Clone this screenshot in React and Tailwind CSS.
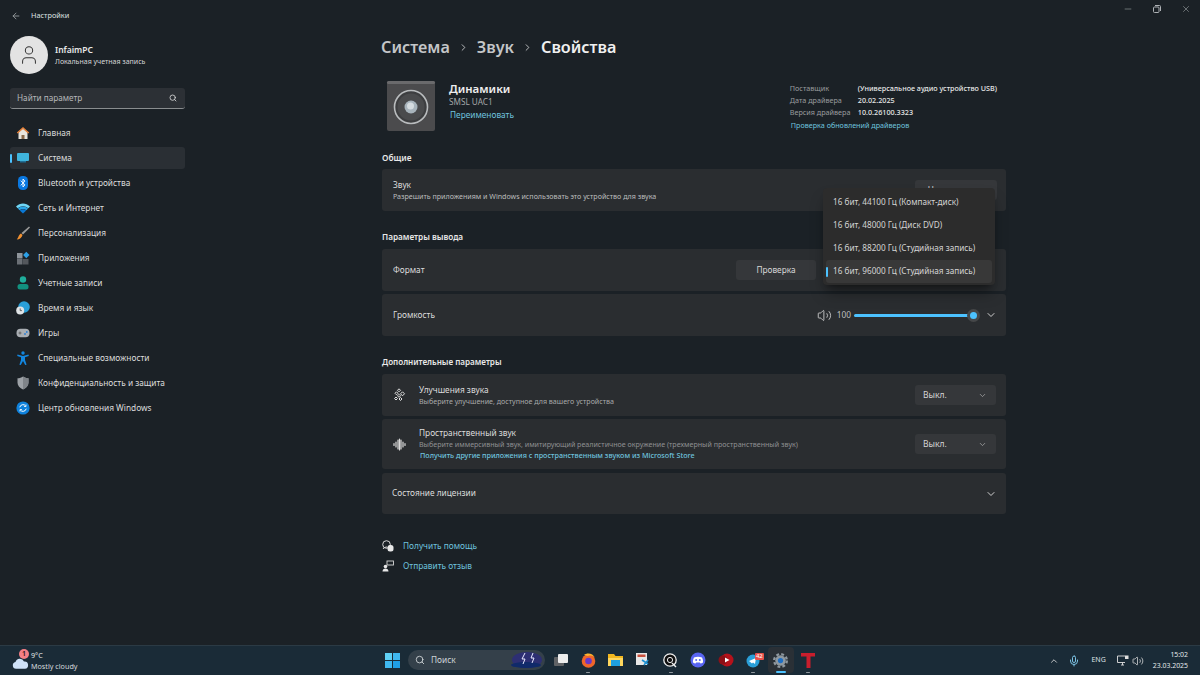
import React from "react";
import {
  ArrowLeft,
  ChevronDown,
  ChevronRight,
  ChevronUp,
  Mic,
  Minus,
  Search,
  User,
  Volume2,
  X,
} from "lucide-react";

const HomeIcon = () => (
  <svg width="14" height="14" viewBox="0 0 14 14">
    <path d="M2.5 6.5 7 2.5l4.5 4V13h-9z" fill="#e8e4dc" />
    <path d="M5.5 9h3v4h-3z" fill="#8a6a4a" />
    <path d="M7 1 .8 6.6l1 1L7 3l5.2 4.6 1-1z" fill="#e8843c" />
  </svg>
);
const SystemIcon = () => (
  <svg width="14" height="12" viewBox="0 0 14 12">
    <rect x="1" y="1" width="12" height="8" rx="1" fill="#3fb4dc" />
    <rect x="4" y="9" width="6" height="1.5" fill="#1f6f96" />
  </svg>
);
const BluetoothIcon = () => (
  <svg width="10" height="14" viewBox="0 0 10 14">
    <rect width="10" height="14" rx="4.5" fill="#0a78e0" />
    <path d="M2.7 4.6 7 8.9 5 11V3l2 2.1-4.3 4.3" fill="none" stroke="#fff" strokeWidth=".9" />
  </svg>
);
const WifiIcon = () => (
  <svg width="14" height="11" viewBox="0 0 14 11">
    <path d="M0 3.5C4-.6 10-.6 14 3.5L12.3 5.3C9 2.6 5 2.6 1.7 5.3z" fill="#6fd6f5" />
    <path d="M1.9 5.5c3-2.8 7.2-2.8 10.2 0L10.4 7.2c-2-1.7-4.8-1.7-6.8 0z" fill="#2ba6e8" />
    <path d="M3.8 7.4c2-1.5 4.4-1.5 6.4 0L7 10.6z" fill="#0a78d4" />
  </svg>
);
const BrushIcon = () => (
  <svg width="14" height="14" viewBox="0 0 14 14">
    <path d="M13 .5 14 1.5 7 8.5 5.5 7z" fill="#9a9a9a" />
    <path d="M5 7.5 6.5 9C6 11.5 3.5 13.5.8 13.5 2.5 12 2.5 8.5 5 7.5z" fill="#f09030" />
  </svg>
);
const AppsIcon = () => (
  <svg width="14" height="14" viewBox="0 0 14 14">
    <rect x="1" y="2" width="5.5" height="5.5" fill="#8f959b" />
    <rect x="1" y="8" width="5.5" height="5.5" fill="#6b7076" />
    <rect x="7" y="8" width="5.5" height="5.5" fill="#53575c" />
    <path d="M10.3 .8 13.5 4l-3.2 3.2L7.1 4z" fill="#2b9fe6" />
  </svg>
);
const AccountIcon = () => (
  <svg width="12" height="14" viewBox="0 0 12 14">
    <circle cx="6" cy="3.5" r="3.2" fill="#1fae9c" />
    <rect x="0.5" y="8" width="11" height="5.5" rx="2.5" fill="#12917f" />
  </svg>
);
const TimeIcon = () => (
  <svg width="14" height="14" viewBox="0 0 14 14">
    <circle cx="8" cy="6" r="5.8" fill="#2a9fd8" />
    <circle cx="4.2" cy="9.5" r="4" fill="#dfe3e6" />
    <path d="M4.2 7.4v2.2h1.7" fill="none" stroke="#444" strokeWidth=".8" />
  </svg>
);
const GamesIcon = () => (
  <svg width="14" height="10" viewBox="0 0 14 10">
    <rect x=".5" y=".8" width="13" height="8.4" rx="4" fill="#a9aeb3" />
    <path d="M2.5 5h3M4 3.5v3" stroke="#555" strokeWidth=".8" />
    <circle cx="9" cy="6" r=".9" fill="#2b7fd4" />
    <circle cx="10.8" cy="4" r=".9" fill="#2b7fd4" />
  </svg>
);
const AccessIcon = () => (
  <svg width="12" height="14" viewBox="0 0 12 14">
    <circle cx="6" cy="2" r="1.7" fill="#1387e0" />
    <path d="M.5 3.6 6 5l5.5-1.4.3 1.3L8 6.2V9l1.6 4.7-1.4.3L6 10 3.8 14l-1.4-.3L4 9V6.2L.2 4.9z" fill="#1387e0" />
  </svg>
);
const ShieldIcon = () => (
  <svg width="12" height="14" viewBox="0 0 12 14">
    <path d="M6 .5c1.5 1.2 3.5 1.8 5.5 1.8v4.5c0 3-2.3 5.3-5.5 6.7C2.8 12.1.5 9.8.5 6.8V2.3C2.5 2.3 4.5 1.7 6 .5z" fill="#9da2a7" />
    <path d="M6 .5c1.5 1.2 3.5 1.8 5.5 1.8v4.5c0 3-2.3 5.3-5.5 6.7z" fill="#7f8489" />
  </svg>
);
const UpdateIcon = () => (
  <svg width="14" height="14" viewBox="0 0 14 14">
    <circle cx="7" cy="7" r="6.6" fill="#0f82dc" />
    <path d="M3.8 6.3A3.3 3.3 0 0 1 9.700 5M10.200 7.700A3.3 3.3 0 0 1 4.3 9" fill="none" stroke="#fff" strokeWidth="1" />
    <path d="M10 3.5v2H8M4 10.5v-2h2" fill="none" stroke="#fff" strokeWidth=".8" />
  </svg>
);

const navItems = [
  { label: "Главная", icon: <HomeIcon /> },
  { label: "Система", icon: <SystemIcon />, active: true },
  { label: "Bluetooth и устройства", icon: <BluetoothIcon /> },
  { label: "Сеть и Интернет", icon: <WifiIcon /> },
  { label: "Персонализация", icon: <BrushIcon /> },
  { label: "Приложения", icon: <AppsIcon /> },
  { label: "Учетные записи", icon: <AccountIcon /> },
  { label: "Время и язык", icon: <TimeIcon /> },
  { label: "Игры", icon: <GamesIcon /> },
  { label: "Специальные возможности", icon: <AccessIcon /> },
  { label: "Конфиденциальность и защита", icon: <ShieldIcon /> },
  { label: "Центр обновления Windows", icon: <UpdateIcon /> },
];

const SpeakerArt = () => (
  <svg width="50" height="52" viewBox="0 0 50 52">
    <rect x="1" y="1" width="48" height="50" rx="2" fill="#4b4b4d" />
    <rect x="1" y="1" width="48" height="3" rx="1.5" fill="#6a6a6c" />
    <circle cx="25" cy="27" r="16.5" fill="#3d3e40" stroke="#b9bcbe" strokeWidth="1.6" />
    <circle cx="25" cy="27" r="13.5" fill="#4a4b4d" />
    <circle cx="25" cy="27" r="6.5" fill="#a8b4bc" />
    <circle cx="24.5" cy="26" r="3.5" fill="#d5dce0" />
  </svg>
);

const Row = ({ className, children }) => (
  <div className={`flex items-center rounded-[3px] bg-[#2a2d30] ${className}`}>{children}</div>
);

const OffSelect = () => (
  <div className="flex h-[20px] w-[81px] items-center justify-between rounded-[3px] bg-[#35373a] pl-[8px] pr-[9px] text-[8.5px] text-[#d6d6d6]">
    Выкл.
    <ChevronDown size={9} className="text-[#a8a8a8]" />
  </div>
);

const formats = [
  "16 бит, 44100 Гц (Компакт-диск)",
  "16 бит, 48000 Гц (Диск DVD)",
  "16 бит, 88200 Гц (Студийная запись)",
  "16 бит, 96000 Гц (Студийная запись)",
];

const SpatialIcon = () => (
  <svg width="13" height="13" viewBox="0 0 13 13" stroke="#dcdcdc" strokeWidth="1.2" strokeLinecap="round">
    <path d="M1 5.5v2M3 4v5M5 2v9M6.5 1v11M8 2v9M10 4v5M12 5.5v2" />
  </svg>
);
const EnhanceIcon = () => (
  <svg width="13" height="14" viewBox="0 0 13 14" fill="none" stroke="#e0e0e0" strokeWidth="1">
    <path d="M6 .8 7.5 2.3 6 3.8 4.5 2.3zM3.5 3.8 5 5.3 3.5 6.8 2 5.3zM9.5 3.8l2 2-2 2-2-2zM6 6.3l1.5 1.5L6 9.3 4.5 7.8zM3 9l1.5 1.5L3 12l-1.5-1.5zM7.500 9.500 9 11l-1.500 1.500L6 11z" />
  </svg>
);
const HelpIcon = () => (
  <svg width="12" height="12" viewBox="0 0 12 12">
    <circle cx="4.5" cy="4.5" r="3.8" fill="none" stroke="#d8d8d8" strokeWidth="1" />
    <path d="M1 9c1-1.5 2.5-2 4-2" stroke="#d8d8d8" strokeWidth="1" fill="none" />
    <rect x="5.5" y="5" width="6" height="6.5" rx="2.5" fill="#e8e8e8" />
  </svg>
);
const FeedbackIcon = () => (
  <svg width="12" height="12" viewBox="0 0 12 12">
    <rect x="5" y="1" width="6.5" height="4" fill="none" stroke="#d8d8d8" strokeWidth=".9" />
    <circle cx="3.5" cy="6.5" r="1.8" fill="#e8e8e8" />
    <path d="M.5 11.5c0-2 1.3-3 3-3s3 1 3 3z" fill="#e8e8e8" />
  </svg>
);

const Tray = ({ children, dot, active, className = "" }) => (
  <div className={`relative flex h-[26px] w-[27.5px] items-center justify-center ${className}`}>
    {active && <span className="absolute inset-x-[1px] inset-y-0 rounded-[4px] bg-[#2a3036]" />}
    <span className="relative flex">{children}</span>
    {dot && <span className="absolute bottom-[0px] h-[1.5px] w-[4px] rounded-full bg-[#8f979e]" />}
    {active && <span className="absolute bottom-[0px] h-[2px] w-[10px] rounded-full bg-[#4cc2ff]" />}
  </div>
);

const Taskbar = () => (
  <div className="relative flex h-[30px] items-center justify-between border-t border-[#2b3a44] bg-[#1a2b37] text-[#e4e8ea]">
    <div className="flex w-[200px] items-center pl-[12px]">
      <div className="relative h-[18px] w-[19px]">
        <svg width="17" height="14" viewBox="0 0 19 14" className="absolute bottom-0 left-0">
          <path d="M4.5 13.5a3.8 3.8 0 0 1-.6-7.5 5 5 0 0 1 9.5-.6 4 4 0 0 1 1 8.1z" fill="#cfe2f8" />
        </svg>
        <span className="absolute left-[7px] top-[-3px] flex h-[10px] w-[10px] items-center justify-center rounded-full bg-[#f47f86] text-[7px] font-semibold leading-none text-[#2a1114]">
          1
        </span>
      </div>
      <div className="text-[7.2px] leading-[10.5px]">
        <div>9°C</div>
        <div className="text-[#d5dade]">Mostly cloudy</div>
      </div>
    </div>

    <div className="absolute left-[378px] top-[1px] flex items-center">
      <Tray>
        <svg width="15" height="15" viewBox="0 0 15 15" className="ml-[1px]">
          <rect width="7" height="7" fill="#5fd0f5" />
          <rect x="8" width="7" height="7" fill="#3fb8f0" />
          <rect y="8" width="7" height="7" fill="#3fb8f0" />
          <rect x="8" y="8" width="7" height="7" fill="#1f9fe6" />
        </svg>
      </Tray>
      <div className="ml-[2.5px] flex h-[20px] w-[137px] items-center overflow-hidden rounded-full bg-[#34404a] pl-[7px] text-[8.3px] text-[#cfd4d8]">
        <Search size={10} className="text-[#d8dcdf]" />
        <span className="ml-[6px]">Поиск</span>
        <svg width="34" height="18" viewBox="0 0 34 18" className="ml-auto mr-[2px]">
          <ellipse cx="18" cy="9" rx="15" ry="8" fill="#2d2f73" />
          <ellipse cx="17" cy="14" rx="15" ry="3" fill="#102a6a" />
          <path d="M16 2l-3 6h3l-2 5M24 2l-2 5h3l-2 5" stroke="#e8e8ff" strokeWidth="1" fill="none" />
        </svg>
      </div>
      <Tray className="ml-[2px]">
        <svg width="16" height="14" viewBox="0 0 16 14">
          <rect x="1" y="4" width="10" height="9" rx="1" fill="#5f6265" />
          <rect x="5" y="1" width="10" height="9" rx="1" fill="#eceded" />
        </svg>
      </Tray>
      <Tray dot>
        <svg width="15" height="15" viewBox="0 0 15 15">
          <circle cx="7.5" cy="8" r="6.8" fill="#f0662a" />
          <circle cx="7.5" cy="8" r="3.3" fill="#6a37c8" />
          <path d="M3 2c3-2.5 9-2 11 3-2-2.5-5-3-7-2z" fill="#ffb52e" />
        </svg>
      </Tray>
      <Tray>
        <svg width="15" height="14" viewBox="0 0 15 14">
          <path d="M0 1h6l1.500 2H15v10H0z" fill="#f2b71f" />
          <rect y="5" width="15" height="8" fill="#ffd75e" />
          <rect x="3" y="7" width="9" height="6" fill="#1f9fe0" />
        </svg>
      </Tray>
      <Tray>
        <svg width="16" height="16" viewBox="0 0 16 16">
          <rect x="1" y="1" width="11" height="12" fill="#e8e8e8" />
          <rect x="2.5" y="2.5" width="8" height="2.5" fill="#c8503c" />
          <path d="M7 8l6 4M13 8l-4 5" stroke="#1d8fd0" strokeWidth="1.6" />
        </svg>
      </Tray>
      <Tray dot>
        <svg width="15" height="15" viewBox="0 0 15 15">
          <circle cx="7" cy="7" r="6.2" fill="#111" stroke="#f0f0f0" strokeWidth="1.3" />
          <circle cx="7" cy="7" r="2.6" fill="none" stroke="#f0f0f0" strokeWidth="1" />
          <path d="M9 10l4 4" stroke="#f0f0f0" strokeWidth="1.5" />
        </svg>
      </Tray>
      <Tray>
        <svg width="16" height="16" viewBox="0 0 16 16">
          <circle cx="8" cy="8" r="7.5" fill="#5865f2" />
          <path d="M4 5.5c2.5-1 5.5-1 8 0 1 2 1.2 3.500 1 5-1 .7-1.800 1-2.500 1l-.7-1.100H6.200l-.7 1.100c-.7 0-1.500-.3-2.500-1-.2-1.500 0-3 1-5z" fill="#fff" />
          <circle cx="6.2" cy="8" r="1" fill="#5865f2" />
          <circle cx="9.8" cy="8" r="1" fill="#5865f2" />
        </svg>
      </Tray>
      <Tray>
        <svg width="16" height="15" viewBox="0 0 16 15">
          <circle cx="9" cy="7" r="6.5" fill="#b5121b" />
          <circle cx="5" cy="7" r="4.5" fill="#8c0f16" />
          <path d="M7 4.5v5l4.5-2.500z" fill="#fff" />
        </svg>
      </Tray>
      <Tray dot>
        <svg width="15" height="15" viewBox="0 0 15 15">
          <circle cx="7" cy="8" r="6.5" fill="#2a9fd8" />
          <path d="M3 8l7-3-1 6-2-1.5-1 1z" fill="#fff" />
        </svg>
        <span className="absolute right-[-3px] top-[0px] rounded-[1px] bg-[#e8504a] px-[1px] text-[6px] leading-[7px] text-white">
          42
        </span>
      </Tray>
      <Tray active>
        <svg width="15" height="15" viewBox="0 0 16 16">
          <circle cx="8" cy="8" r="6.8" fill="none" stroke="#8f989f" strokeWidth="2.4" strokeDasharray="3 2.34" />
          <circle cx="8" cy="8" r="5.6" fill="#8f989f" />
          <circle cx="8" cy="8" r="2.8" fill="#1f6fc4" />
        </svg>
      </Tray>
      <Tray dot>
        <svg width="14" height="15" viewBox="0 0 14 15">
          <path d="M0 0h14v3.5H9.5V15H5.5V3.5H0z" fill="#c81e2d" />
        </svg>
      </Tray>
    </div>

    <div className="ml-auto flex items-center pr-[12px]">
      <ChevronUp size={10} className="mr-[9px] text-[#e0e0e0]" />
      <Mic size={12} className="mr-[11px] text-[#7cc3e4]" />
      <span className="mr-[11px] text-[7px] text-[#dfe3e6]">ENG</span>
      <svg width="12" height="11" viewBox="0 0 12 11" fill="none" stroke="#e0e0e0" strokeWidth=".9" className="mr-[3px]">
        <path d="M8 1H.5v6.500H8M4 10h3M5.500 7.500V10" />
        <rect x="8" y=".5" width="3.5" height="3.5" fill="#e0e0e0" stroke="none" />
      </svg>
      <Volume2 size={12} className="mr-[9px] text-[#e0e0e0]" strokeWidth={1.5} />
      <div className="pb-[2px] text-right text-[6.9px] leading-[11px] text-[#e4e8ea]">
        <div>15:02</div>
        <div>23.03.2025</div>
      </div>
    </div>
  </div>
);

const App = () => {
  return (
    <div className="flex h-[675px] w-[1200px] flex-col overflow-hidden bg-[#1b2126] font-['Noto_Sans','Open_Sans',sans-serif] text-[#e2e3e4]">
      <div className="relative flex h-[645px]">
        <aside className="w-[195px] shrink-0 px-[10px]">
          <div className="flex h-[31px] items-center pl-[1px] text-[7.3px] text-[#dfe1e2]">
            <ArrowLeft size={10} className="text-[#9ea2a5]" />
            <span className="ml-[10px]">Настройки</span>
          </div>
          <div className="mt-[5px] flex items-center">
            <div className="flex h-[38px] w-[38px] items-center justify-center rounded-full bg-[#e3e3e3]">
              <User size={22} strokeWidth={1.1} className="text-[#333]" />
            </div>
            <div className="ml-[7px]">
              <div className="text-[8.5px] font-semibold leading-[12px] text-[#e8e8e8]">InfaimPC</div>
              <div className="text-[7px] leading-[11px] text-[#d5d6d7]">Локальная учетная запись</div>
            </div>
          </div>
          <div className="mt-[14px] flex h-[21px] items-center justify-between rounded-[3px] border-b border-[#8a8d8f] bg-[#2c3035] pl-[7px] pr-[8px] text-[8.2px] text-[#b5b7b9]">
            Найти параметр
            <Search size={8} strokeWidth={2.5} className="text-[#d8d8d8]" />
          </div>
          <nav className="mt-[13px] flex flex-col gap-[3px]">
            {navItems.map((item) => (
              <div
                key={item.label}
                className={`relative flex h-[22px] items-center rounded-[3px] text-[8.3px] text-[#dcdddd] ${
                  item.active ? "bg-[#2a2f34]" : ""
                }`}
              >
                {item.active && (
                  <span className="absolute left-0 h-[9px] w-[2px] rounded-full bg-[#4cc2ff]" />
                )}
                <span className="flex w-[28px] justify-center pr-[3px]">{item.icon}</span>
                {item.label}
              </div>
            ))}
          </nav>
        </aside>

        <main className="relative w-[811px] shrink-0 pl-[187px]">
          <div className="h-[30px]" />
          <div className="-ml-[1px] flex h-[35px] items-center text-[16.2px] font-semibold leading-none text-[#c4c6c8]">
            Система
            <ChevronRight size={11} strokeWidth={2} className="mx-[8px] text-[#c4c6c8]" />
            Звук
            <ChevronRight size={11} strokeWidth={2} className="mx-[8px] text-[#c4c6c8]" />
            <span className="text-[#f0f0f0]">Свойства</span>
          </div>

          <div className="mt-[15px] flex h-[52px] w-[624px] items-start justify-between">
            <div className="flex">
              <div className="ml-[4px]">
                <SpeakerArt />
              </div>
              <div className="ml-[13px] pt-[1px]">
                <div className="text-[11.5px] font-semibold leading-[15px] text-[#eeeeee]">Динамики</div>
                <div className="text-[8.2px] leading-[12px] text-[#a5a7a9]">SMSL UAC1</div>
                <div className="pl-[1px] text-[8.3px] leading-[13px] text-[#6fc3df]">Переименовать</div>
              </div>
            </div>
            <div className="mr-[9px] mt-[2px] text-[7.2px] leading-[12px]">
              <div className="flex">
                <span className="w-[68px] text-[#9a9c9e]">Поставщик</span>
                <span className="font-medium text-[#e8e8e8]">(Универсальное аудио устройство USB)</span>
              </div>
              <div className="flex">
                <span className="w-[68px] text-[#9a9c9e]">Дата драйвера</span>
                <span className="font-medium text-[#e8e8e8]">20.02.2025</span>
              </div>
              <div className="flex">
                <span className="w-[68px] text-[#9a9c9e]">Версия драйвера</span>
                <span className="font-medium text-[#e8e8e8]">10.0.26100.3323</span>
              </div>
              <div className="mt-[1px] pl-[1px] text-[#6fc3df]">Проверка обновлений драйверов</div>
            </div>
          </div>

          <h2 className="mt-[20px] text-[8.3px] font-semibold leading-[12px] text-[#e8e8e8]">Общие</h2>
          <Row className="relative mt-[5px] h-[42px] w-[624px] justify-between pl-[11px] pr-[9px]">
            <div>
              <div className="text-[8.3px] leading-[12px] text-[#dcdcdc]">Звук</div>
              <div className="text-[7.1px] leading-[11px] text-[#bcbdbe]">
                Разрешить приложениям и Windows использовать это устройство для звука
              </div>
            </div>
            <div className="mt-[11px] flex h-[20px] w-[82px] items-center justify-center self-start rounded-[3px] bg-[#35373a] text-[8.3px] text-[#d6d6d6]">
              Не разрешать
            </div>
          </Row>

          <h2 className="mt-[20px] text-[8.2px] font-semibold leading-[12px] text-[#e8e8e8]">Параметры вывода</h2>
          <Row className="mt-[6px] h-[42px] w-[624px] pl-[11px] text-[8.3px] text-[#dcdcdc]">
            <span className="w-[343px]">Формат</span>
            <div className="flex h-[20px] w-[80px] items-center justify-center rounded-[3px] bg-[#35373a] text-[#d8d8d8]">
              Проверка
            </div>
          </Row>
          <Row className="mt-[3px] h-[42px] w-[624px] pl-[11px] pr-[9px] text-[8.3px] text-[#dcdcdc]">
            Громкость
            <Volume2 size={15} strokeWidth={1.3} className="ml-auto text-[#dcdcdc]" />
            <span className="ml-[5px] text-[8.3px] text-[#bdbdbd]">100</span>
            <div className="relative ml-[3px] h-[3px] w-[121px] rounded-full bg-[#4cc2ff]">
              <span className="absolute right-[-5px] top-[-5px] flex h-[13px] w-[13px] items-center justify-center rounded-full bg-[#454749]">
                <span className="h-[7px] w-[7px] rounded-full bg-[#4cc2ff]" />
              </span>
            </div>
            <ChevronDown size={12} className="ml-[10px] text-[#d0d0d0]" />
          </Row>

          <h2 className="mt-[20px] text-[8.1px] font-semibold leading-[12px] text-[#e8e8e8]">Дополнительные параметры</h2>
          <Row className="mt-[6px] h-[42px] w-[624px] pl-[11px] pr-[10px]">
            <EnhanceIcon />
            <div className="ml-[13px]">
              <div className="text-[8.3px] leading-[12px] text-[#dcdcdc]">Улучшения звука</div>
              <div className="text-[7.1px] leading-[11px] text-[#a8a9aa]">
                Выберите улучшение, доступное для вашего устройства
              </div>
            </div>
            <div className="ml-auto">
              <OffSelect />
            </div>
          </Row>
          <Row className="mt-[3px] h-[50px] w-[624px] pl-[11px] pr-[10px]">
            <SpatialIcon />
            <div className="ml-[13px]">
              <div className="text-[8.3px] leading-[12px] text-[#dcdcdc]">Пространственный звук</div>
              <div className="text-[7.1px] leading-[11px] text-[#8f9092]">
                Выберите иммерсивный звук, имитирующий реалистичное окружение (трехмерный пространственный звук)
              </div>
              <div className="pl-[1px] text-[7.2px] font-medium leading-[11px] text-[#6fc3df]">
                Получить другие приложения с пространственным звуком из Microsoft Store
              </div>
            </div>
            <div className="ml-auto">
              <OffSelect />
            </div>
          </Row>
          <Row className="mt-[4px] h-[41px] w-[624px] justify-between pl-[10px] pr-[9px] text-[8.3px] text-[#dcdcdc]">
            Состояние лицензии
            <ChevronDown size={12} className="text-[#d0d0d0]" />
          </Row>

          <div className="mt-[26px] flex flex-col gap-[8px] text-[8.3px] text-[#6fc3df]">
            <div className="flex h-[12px] items-center">
              <HelpIcon />
              <span className="ml-[9px]">Получить помощь</span>
            </div>
            <div className="flex h-[12px] items-center">
              <FeedbackIcon />
              <span className="ml-[9px]">Отправить отзыв</span>
            </div>
          </div>

          <div className="absolute left-[628px] top-[188px] w-[172px] rounded-[4px] bg-[#2c2c2c] px-[3px] pb-[2px] pt-[3px] text-[8.2px] text-[#d4d4d4] shadow-lg shadow-black/40">
            {formats.map((f, i) => (
              <div
                key={f}
                className={`relative flex h-[23px] items-center rounded-[3px] pl-[7px] ${
                  i === 3 ? "bg-[#383838]" : ""
                }`}
              >
                {i === 3 && <span className="absolute left-0 h-[10px] w-[2px] rounded-full bg-[#4cc2ff]" />}
                {f}
              </div>
            ))}
          </div>
        </main>

        <div className="absolute right-[9px] top-[4px] flex items-center text-[#aeb2b5]">
          <Minus size={10} strokeWidth={1.3} />
          <svg width="8" height="8" viewBox="0 0 8 8" fill="none" stroke="#aeb2b5" strokeWidth="1" className="ml-[20px]">
            <rect x=".5" y="2" width="5.5" height="5.5" rx="1" />
            <path d="M2 .5h4.5a1 1 0 0 1 1 1V6" />
          </svg>
          <X size={10} strokeWidth={1.3} className="ml-[20px]" />
        </div>
      </div>
      <Taskbar />
    </div>
  );
};

export default App;
